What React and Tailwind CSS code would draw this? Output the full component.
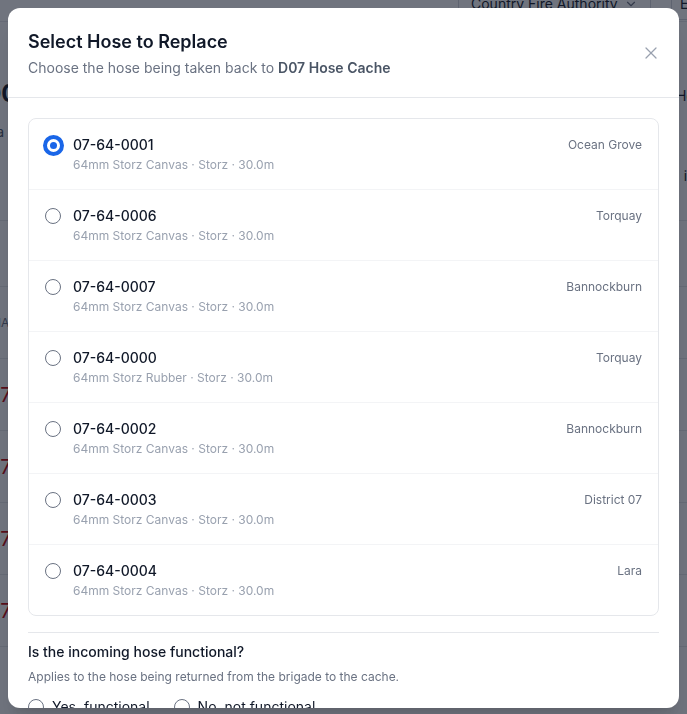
import React, { useState } from 'react';
import { X, ChevronDown } from 'lucide-react';

const hoses = [
  { id: '07-64-0001', desc: '64mm Storz Canvas · Storz · 30.0m', where: 'Ocean Grove' },
  { id: '07-64-0006', desc: '64mm Storz Canvas · Storz · 30.0m', where: 'Torquay' },
  { id: '07-64-0007', desc: '64mm Storz Canvas · Storz · 30.0m', where: 'Bannockburn' },
  { id: '07-64-0000', desc: '64mm Storz Rubber · Storz · 30.0m', where: 'Torquay' },
  { id: '07-64-0002', desc: '64mm Storz Canvas · Storz · 30.0m', where: 'Bannockburn' },
  { id: '07-64-0003', desc: '64mm Storz Canvas · Storz · 30.0m', where: 'District 07' },
  { id: '07-64-0004', desc: '64mm Storz Canvas · Storz · 30.0m', where: 'Lara' },
];

const Radio = ({ checked }) =>
  checked ? (
    <span className="flex h-[21px] w-[21px] shrink-0 items-center justify-center rounded-full border-[4px] border-[#1a66e8] bg-white">
      <span className="h-[7px] w-[7px] rounded-full bg-[#1a66e8]" />
    </span>
  ) : (
    <span className="h-[16px] w-[16px] shrink-0 rounded-full border border-gray-500 bg-white" />
  );

// page sitting behind the dialog, mostly hidden
const BackgroundPage = () => (
  <div className="min-h-screen bg-white text-gray-900">
    <div className="flex h-[22px] items-start justify-end gap-5 border-b border-gray-200 pr-0">
      <div className="-mt-3 flex h-[32px] w-[193px] items-center justify-between rounded-md border border-gray-300 px-3 text-sm">
        Country Fire Authority
        <ChevronDown size={14} className="text-gray-500" />
      </div>
      <div className="-mt-3 -mr-6 flex h-[32px] w-[40px] items-center rounded-md border border-gray-300 px-2 text-sm">E</div>
    </div>
    <div className="flex justify-between pt-[56px]">
      <div className="-ml-4">
        <div className="text-2xl font-bold">D07</div>
        <div className="mt-3 text-sm text-gray-600">ma</div>
      </div>
      <div className="-mr-4 pt-2 text-right">
        <div className="text-sm">Hon</div>
        <div className="mt-[60px] text-sm">ive</div>
        <div className="ml-auto mt-1 h-4 w-4 rounded-full bg-red-700" />
      </div>
    </div>
    <div className="mt-[14px] border-t border-gray-200" />
    <div className="h-[66px] border-b border-gray-200" />
    <div className="flex h-[72px] items-center border-b border-gray-200 -ml-2 text-xs text-gray-500">NAME</div>
    {[0, 1, 2, 3].map((i) => (
      <div key={i} className="flex h-[72px] items-center justify-between border-b border-gray-200">
        <span className="-ml-3 text-xl text-red-700">07</span>
        <span />
      </div>
    ))}
    <div className="pl-[360px] text-lg">64mm Storz</div>
  </div>
);

export default function App() {
  const [selected] = useState('07-64-0001');

  return (
    <div className="relative h-screen overflow-hidden" style={{ fontFamily: 'Inter, "Noto Sans", sans-serif' }}>
      <BackgroundPage />
      <div className="fixed inset-0 flex bg-gray-900/60 p-2">
        <div className="flex h-[700px] flex-1 flex-col overflow-hidden rounded-xl bg-white shadow-xl">
          <div className="flex items-center justify-between border-b border-gray-200 px-5 pt-5 pb-[19px]">
            <div>
              <h2 className="text-lg font-semibold leading-7 text-gray-900">Select Hose to Replace</h2>
              <p className="mt-0.5 text-sm text-gray-500">
                Choose the hose being taken back to <span className="font-semibold text-gray-600">D07 Hose Cache</span>
              </p>
            </div>
            <button className="-mr-1.5 p-1 text-gray-400">
              <X size={20} strokeWidth={1.5} />
            </button>
          </div>

          <div className="px-5 pt-5">
            <div className="divide-y divide-gray-100 rounded-lg border border-gray-200">
              {hoses.map((h) => (
                <div key={h.id} className="flex items-start justify-between px-4 py-4">
                  <div className="flex items-start gap-3">
                    <div className="flex h-5 w-4 items-center justify-center">
                      <Radio checked={h.id === selected} />
                    </div>
                    <div>
                      <div className="text-sm font-medium leading-5 text-gray-900">{h.id}</div>
                      <div className="mt-0.5 text-xs text-gray-400">{h.desc}</div>
                    </div>
                  </div>
                  <div className="text-xs leading-5 text-gray-500">{h.where}</div>
                </div>
              ))}
            </div>

            <div className="mt-4 border-t border-gray-200 pt-[9px]">
              <div className="text-sm font-medium text-gray-900">Is the incoming hose functional?</div>
              <div className="mt-[7px] text-xs text-gray-500">Applies to the hose being returned from the brigade to the cache.</div>
              <div className="mt-3 flex gap-6 text-sm text-gray-900">
                <label className="flex items-center gap-2">
                  <Radio checked={false} />
                  Yes, functional
                </label>
                <label className="flex items-center gap-2">
                  <Radio checked={false} />
                  No, not functional
                </label>
              </div>
            </div>
          </div>
        </div>
      </div>
    </div>
  );
}
